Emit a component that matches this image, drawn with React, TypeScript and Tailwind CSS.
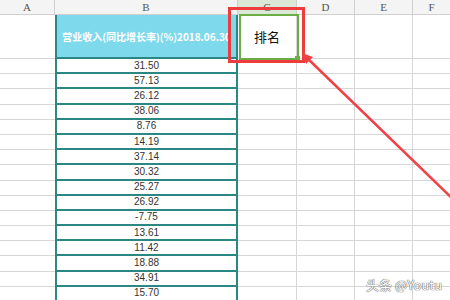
import React from "react";

const values = [
  "31.50", "57.13", "26.12", "38.06", "8.76", "14.19", "37.14", "30.32",
  "25.27", "26.92", "-7.75", "13.61", "11.42", "18.88", "34.91", "15.70",
];

const grid = "grid grid-cols-[55px_183px_59px_58px_58px_37px]";

export default function App() {
  return (
    <div className="relative w-[450px] h-[300px] overflow-hidden bg-white font-['Liberation_Sans',sans-serif]">
      {/* column letters */}
      <div className={`${grid} h-[15px] bg-[#f4f4f4] text-[11px] leading-[14px] text-[#555] font-['Liberation_Serif',serif]`}>
        <div className="border-r border-b border-[#d0d0d0] text-center">A</div>
        <div className="border-r border-b border-[#d0d0d0] text-center">B</div>
        <div className="border-r border-b border-[#d0d0d0] bg-[#dce8d6] text-center">C</div>
        <div className="border-r border-b border-[#d0d0d0] text-center">D</div>
        <div className="border-r border-b border-[#d0d0d0] text-center">E</div>
        <div className="border-b border-[#d0d0d0] text-center">F</div>
      </div>

      {/* title row */}
      <div className={`${grid} h-[44px]`}>
        <div className="border-b border-[#d6d6d6]"></div>
        <div className="flex items-center justify-center overflow-hidden whitespace-nowrap border-x-2 border-b-2 border-[#2a8784] bg-[#7fd9ec] text-[10px] font-bold text-white font-['Noto_Sans_CJK_SC',sans-serif]">
          营业收入(同比增长率)(%)2018.06.30
        </div>
        <div className="flex items-center justify-center border-r border-b border-[#d6d6d6] text-[13px] text-[#111] font-['Noto_Sans_CJK_SC',sans-serif]">
          排名
        </div>
        <div className="border-r border-b border-[#d6d6d6]"></div>
        <div className="border-r border-b border-[#d6d6d6]"></div>
        <div className="border-b border-[#d6d6d6]"></div>
      </div>

      {/* data rows */}
      {values.map((v) => (
        <div key={v} className={`${grid} h-[15.2px]`}>
          <div className="border-b border-[#d6d6d6]"></div>
          <div className="flex items-center justify-center border-x-2 border-b-2 border-[#2a8784] text-[10px] leading-none text-[#333]">
            {v}
          </div>
          <div className="border-r border-b border-[#d6d6d6]"></div>
          <div className="border-r border-b border-[#d6d6d6]"></div>
          <div className="border-r border-b border-[#d6d6d6]"></div>
          <div className="border-b border-[#d6d6d6]"></div>
        </div>
      ))}

      {/* selection + highlight */}
      <div className="absolute left-[239px] top-[14px] w-[60px] h-[46px] border-2 border-[#6cae45]"></div>
      <div className="absolute left-[295px] top-[56px] w-[5px] h-[5px] bg-[#6cae45]"></div>
      <div className="absolute left-[228px] top-[7px] w-[77px] h-[56px] border-[3px] border-[#ee3b3e]"></div>

      {/* arrow */}
      <svg className="absolute left-0 top-0" width="450" height="300" viewBox="0 0 450 300">
        <line x1="455" y1="201" x2="306" y2="57" stroke="#ef4146" strokeWidth="2.5" />
        <path d="M302 53 L313 57 L306 64 Z" fill="#ef4146" />
      </svg>

      {/* watermark */}
      <div className="absolute left-[366px] top-[275px] text-[13px] text-white font-['Noto_Sans_CJK_SC',sans-serif] [text-shadow:0_0_1px_#444,0_0_1px_#444]">
        头条 @Youtu
      </div>
    </div>
  );
}
